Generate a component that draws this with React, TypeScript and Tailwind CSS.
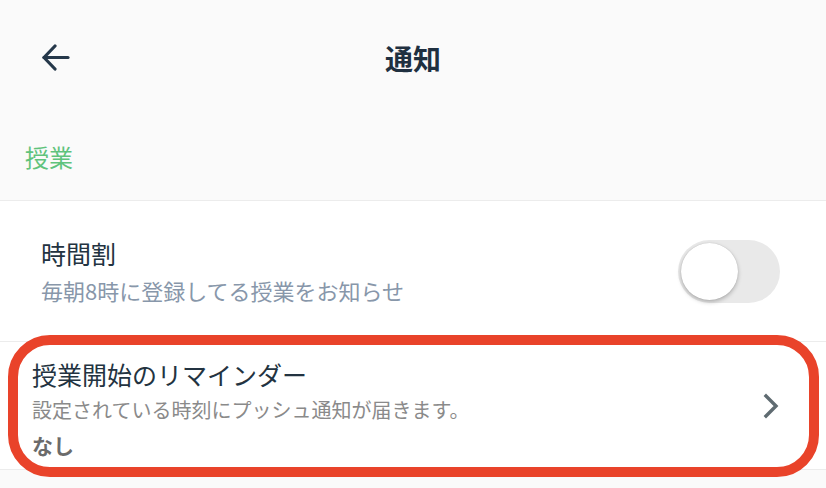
import { useState } from 'react'

const font = { fontFamily: '"Noto Sans CJK JP", "Noto Sans", sans-serif' }

function BackArrow() {
  return (
    <svg width="28" height="27" viewBox="0 0 28 27" fill="none" stroke="#25384a" strokeWidth="3.2" strokeLinecap="round" strokeLinejoin="round">
      <line x1="2" y1="13.5" x2="26" y2="13.5" />
      <polyline points="13,2 2,13.5 13,25" />
    </svg>
  )
}

function Chevron() {
  return (
    <svg width="18" height="26" viewBox="0 0 18 26" fill="none" stroke="#5f6b71" strokeWidth="3.4" strokeLinecap="square" strokeLinejoin="miter">
      <polyline points="3,3 13,13 3,23" />
    </svg>
  )
}

function Toggle({ on, onChange }: { on: boolean; onChange: () => void }) {
  return (
    <button
      onClick={onChange}
      className={`w-[102px] h-[63px] rounded-full flex items-center px-[3px] ${on ? 'bg-[#5cc27a] justify-end' : 'bg-[#e9e9e9] justify-start'}`}
    >
      <span className="block w-[57px] h-[57px] rounded-full bg-white shadow-[0_2px_4px_rgba(0,0,0,0.25),0_0_1px_rgba(0,0,0,0.2)]" />
    </button>
  )
}

export default function App() {
  const [timetable, setTimetable] = useState(false)

  return (
    <div className="relative w-[826px] h-[488px] overflow-hidden bg-[#fafafa]" style={font}>
      {/* Header */}
      <div className="relative h-[116px] flex items-center justify-center">
        <button className="absolute left-[42px] top-[44px]">
          <BackArrow />
        </button>
        <h1 className="text-[28px] font-bold text-[#1f3040] leading-none">通知</h1>
      </div>

      {/* Section label */}
      <div className="h-[84px] pl-[25px] pt-[24px]">
        <span className="text-[24px] leading-[34px] text-[#5fc37c]">授業</span>
      </div>

      {/* List */}
      <div className="bg-white border-t border-b border-[#ececec]">
        <div className="h-[141px] flex items-center justify-between pl-[41px] pr-[46px] border-b border-[#ececec]">
          <div className="flex flex-col pt-[3px]">
            <span className="text-[25px] leading-[34px] text-[#233341]">時間割</span>
            <span className="text-[22px] leading-[40px] text-[#8897aa]">毎朝8時に登録してる授業をお知らせ</span>
          </div>
          <Toggle on={timetable} onChange={() => setTimetable(!timetable)} />
        </div>

        <div className="h-[127px] flex items-center justify-between pl-[32px] pr-[45px]">
          <div className="flex flex-col pt-[7px]">
            <span className="text-[25px] leading-[34px] text-[#233341]">授業開始のリマインダー</span>
            <span className="text-[20px] leading-[37px] text-[#8a8a8a]">設定されている時刻にプッシュ通知が届きます。</span>
            <span className="text-[21px] leading-[34px] font-bold text-[#6b6b6b]">なし</span>
          </div>
          <Chevron />
        </div>
      </div>

      {/* Highlight annotation */}
      <div className="absolute left-[8px] top-[335px] w-[811px] h-[142px] rounded-[42px] border-[10px] border-[#e9432a] pointer-events-none" />
    </div>
  )
}
